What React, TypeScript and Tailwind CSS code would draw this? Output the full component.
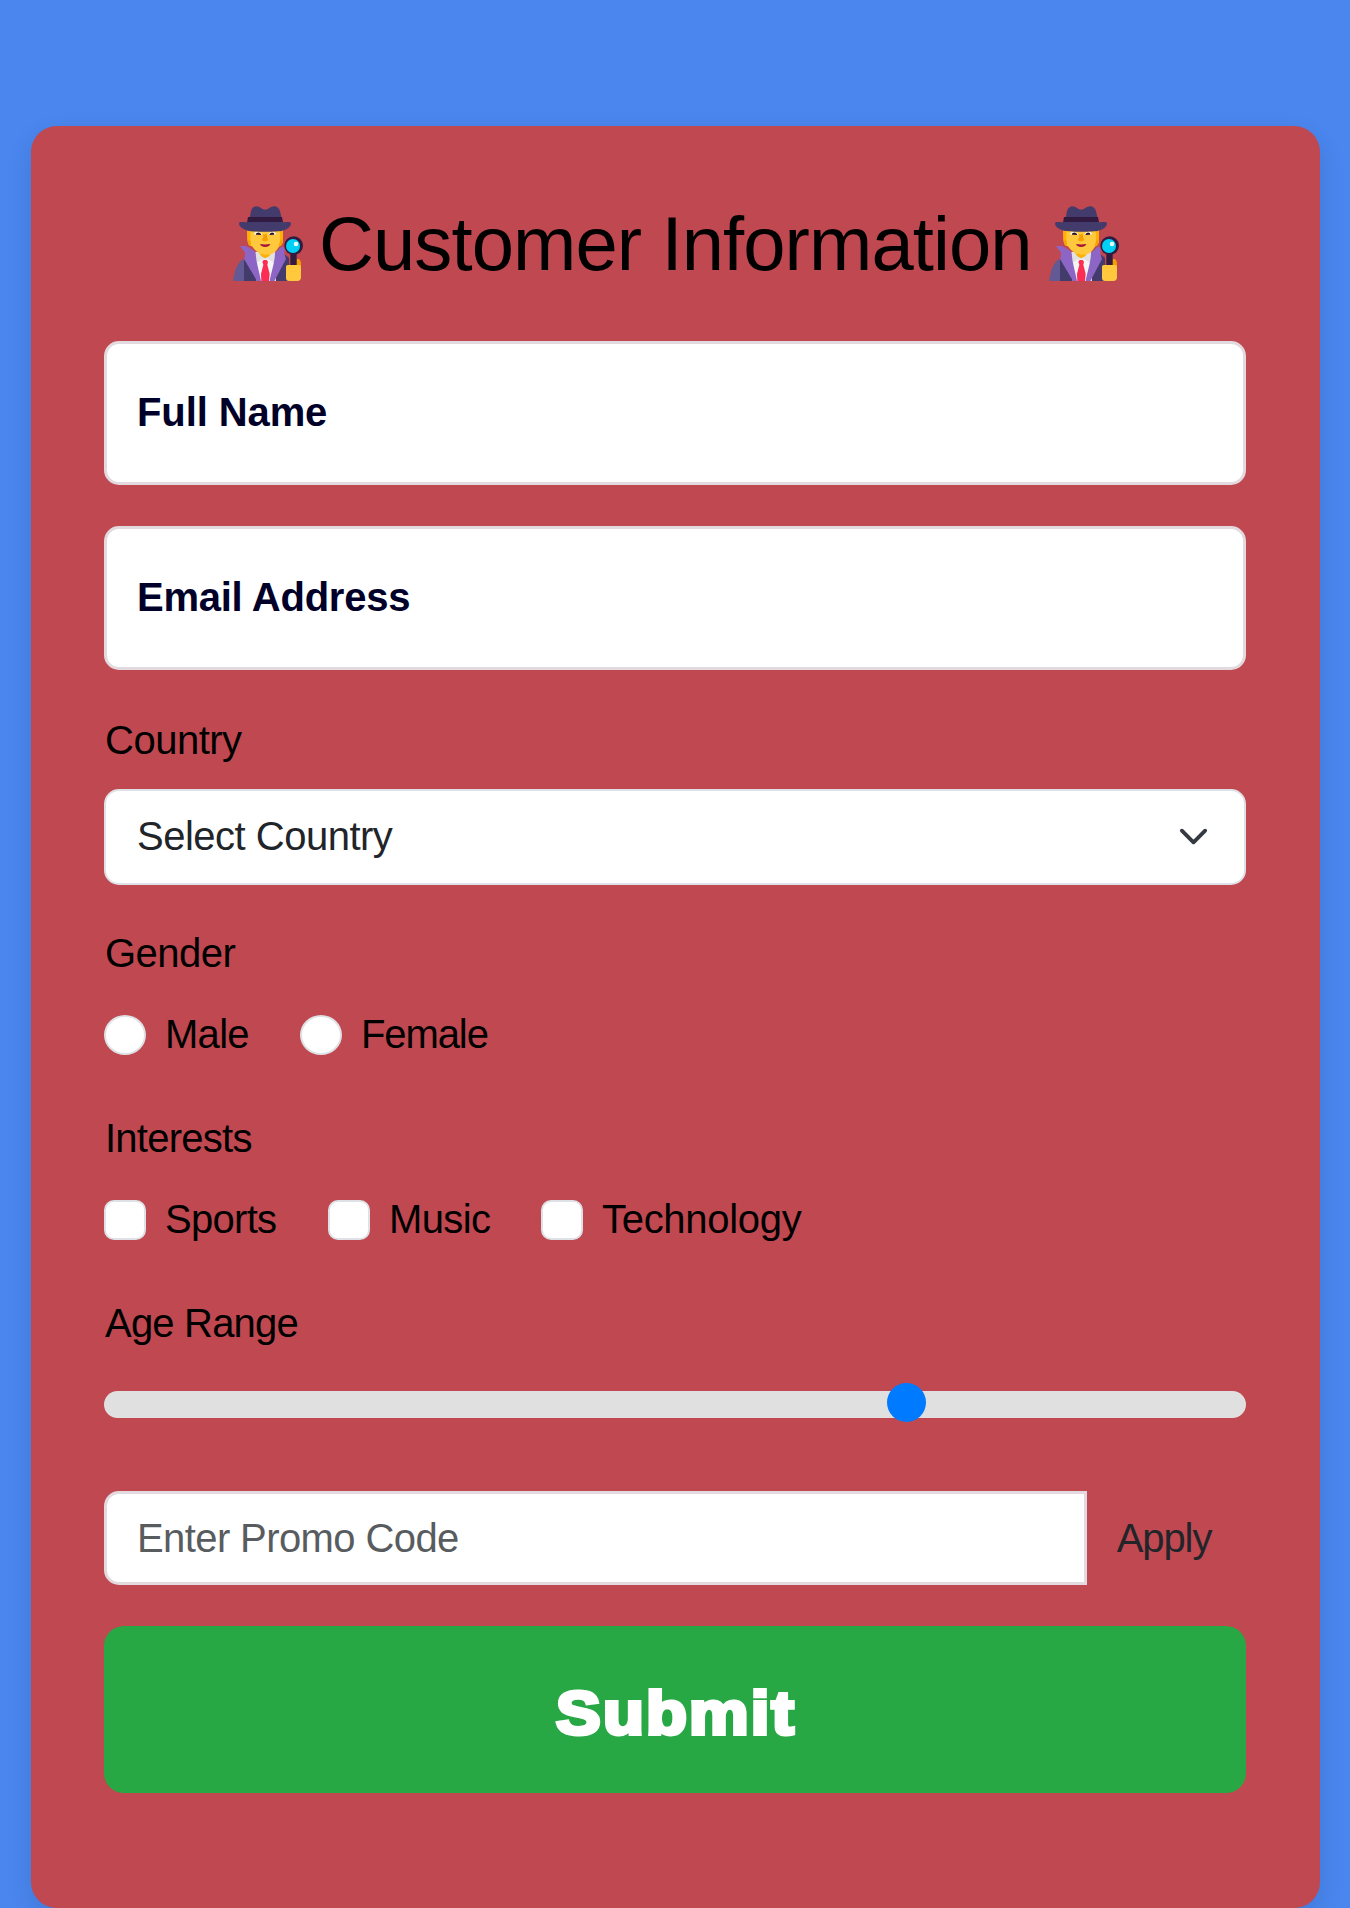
import React from "react";

function Detective() {
  return (
    <svg viewBox="39 48 210 225" className="h-[75px] w-[70px] shrink-0" aria-label="detective">
      <path d="M72 207C54 214 45 236 39 273H90V207Z" fill="#635994" />
      <path d="M72 207L80 190H190L207 204V273H72Z" fill="#433b6b" />
      <path d="M106 186H164L168 273H110Z" fill="#e6e6e6" />
      <path d="M104 192L121 273H151L170 192L150 205L135 210L120 205Z" fill="#f4f4f4" />
      <path d="M106 187L109 218L122 210L135 204L148 210L163 218L166 187Z" fill="#e1e1e3" />
      <path d="M115 185L124 199L135 205L147 199L157 185Z" fill="#ffb002" />
      <path d="M82 120H189V148C189 158 187 167 178 169L168 183C153 197 146 193 135 194C122 193 108 187 96 169L90 167C82 165 82 140 82 120Z" fill="#ffc83d" />
      <path d="M82 122H91V153L93 169C84 165 82 155 82 143Z" fill="#ffb002" />
      <path d="M83 150L91 153L93 168L87 165Z" fill="#f59f00" />
      <path d="M189 122H180V153L177 169C187 165 189 155 189 143Z" fill="#ffb002" />
      <path d="M189 146L180 153L177 169L185 165Z" fill="#f59f00" />
      <path d="M102 132C105 123 123 123 127 134L123 135H106Z" fill="#fff" />
      <path d="M145 134C148 123 165 123 168 132L164 135H148Z" fill="#fff" />
      <path d="M107 134C108 125 123 125 124 135ZM148 135C149 125 164 125 163 134Z" fill="#351513" />
      <path d="M129 133H141V142L144 148C144 153 139 154 135 154C130 154 126 152 126 147L130 142Z" fill="#f59f00" />
      <path d="M120 162C130 164 140 164 151 162C148 174 123 174 120 162Z" fill="#a3133b" />
      <path d="M60 168L78 168C86 171 92 179 100 180L107 189C108 218 118 244 123 273H111L72 207L76 190Z" fill="#8d65c5" />
      <path d="M165 189L187 168L194 177L193 190L198 207L163 273H149C154 245 164 220 165 189Z" fill="#8d65c5" />
      <path d="M131 210H140L144 215L142 224L149 252L147 273H124L123 252L130 224L127 215Z" fill="#fb2d55" />
      <path d="M87 96L93 63C97 49 109 46 118 51L128 57Q135 60 143 57L153 51C164 46 176 49 180 64L188 96Z" fill="#433b6b" />
      <path d="M84 81H186L189 98H81Z" fill="#321b41" />
      <path d="M57 99C60 93 75 98 83 96H188C197 98 212 93 213 101C212 111 199 119 187 122C177 126 95 126 84 122C71 119 57 111 57 99Z" fill="#433b6b" />
      <path d="M229 208C239 205 243 212 243 222V237H229Z" fill="#f59f00" />
      <path d="M211 190H230V232H211Z" fill="#321b41" />
      <circle cx="221" cy="167" r="28" fill="#321b41" />
      <circle cx="219" cy="168" r="21" fill="#00d0f5" />
      <circle cx="228" cy="162" r="7" fill="#e5fbff" />
      <path d="M203 225H236Q243 225 243 232V262Q243 273 232 273H207Q198 273 198 264V231Q198 225 203 225Z" fill="#ffc83d" />
    </svg>
  );
}

const text = "whitespace-nowrap text-[40px] leading-[60px]";

function TextField({ label, className }: { label: string; className: string }) {
  return (
    <div className={`flex h-36 items-center rounded-[15px] border-[3px] border-[#e2dade] bg-white pl-[30px] ${className}`}>
      <span className={`${text} -mt-0.5 font-bold text-[#000028]`}>{label}</span>
    </div>
  );
}

function Option({ label, box, className }: { label: string; box: string; className: string }) {
  return (
    <label className={`flex h-10 items-center ${className}`}>
      <span className={`h-10 w-[42px] shrink-0 border-2 border-[#dee2e6] bg-white ${box}`} />
      <span className={`${text} -mt-0.5 ml-[19px]`}>{label}</span>
    </label>
  );
}

export default function App() {
  return (
    <div className="h-[1908px] w-full overflow-hidden bg-[#4a86ee] px-[30.5px] pt-[126px] font-['Liberation_Sans',Arial,sans-serif] text-black">
      <form className="flex h-[1782px] flex-col rounded-[26px] bg-[#c04850] px-[73.5px] pt-20 shadow-[0_10px_26px_rgba(0,0,0,0.1)]">
        <div className="flex h-[75px] items-center justify-center pl-0.5">
          <Detective />
          <h1 className="ml-4 mr-[13px] w-[717px] whitespace-nowrap text-[76px] leading-[75px] tracking-[-0.9px]">Customer Information</h1>
          <Detective />
        </div>

        <TextField label="Full Name" className="mt-[60px] tracking-[-0.1px]" />
        <TextField label="Email Address" className="mt-[41px] tracking-[-0.25px]" />

        <div className={`${text} mt-10 pl-px tracking-[-0.5px]`}>Country</div>
        <div className="mt-[19px] flex h-24 items-center justify-between rounded-[15px] border-2 border-[#dee2e6] bg-white pl-[31px] pr-[35px]">
          <span className={`${text} -mt-0.5 tracking-[-0.5px] text-[#212529]`}>Select Country</span>
          <svg viewBox="0 0 16 16" className="-mt-0.5 h-[31px] w-[31px]" fill="none" stroke="#343a40" strokeWidth="2" strokeLinecap="round" strokeLinejoin="round">
            <path d="m2 5 6 6 6-6" />
          </svg>
        </div>

        <div className={`${text} mt-[38px] pl-px tracking-[-0.5px]`}>Gender</div>
        <div className="mt-8 flex">
          <Option label="Male" box="rounded-[50%]" className="w-[196px] tracking-[-0.7px]" />
          <Option label="Female" box="rounded-[50%]" className="tracking-[-1.1px]" />
        </div>

        <div className={`${text} mt-[53px] pl-px tracking-[-0.75px]`}>Interests</div>
        <div className="mt-8 flex">
          <Option label="Sports" box="rounded-[10px]" className="w-[224px] tracking-[-0.7px]" />
          <Option label="Music" box="rounded-[10px]" className="w-[213px] tracking-[-0.6px]" />
          <Option label="Technology" box="rounded-[10px]" className="tracking-[-0.3px]" />
        </div>

        <div className={`${text} mt-[53px] pl-px tracking-[-0.8px]`}>Age Range</div>
        <div className="relative mt-[38px] h-[27px] shrink-0 rounded-full bg-[#e0e0e0]">
          <span className="absolute left-[783px] top-[-8.5px] h-[39px] w-[39px] rounded-full bg-[#007bff]" />
        </div>

        <div className="mt-[73px] flex h-[94px]">
          <div className="flex w-[983px] items-center rounded-l-[15px] border-[3px] border-[#e2dade] bg-white pl-[30px]">
            <span className={`${text} tracking-[-0.6px] text-[#595c5f]`}>Enter Promo Code</span>
          </div>
          <button type="button" className={`${text} flex-1 pr-[5px] tracking-[-1.1px] text-[#212529]`}>Apply</button>
        </div>

        <button
          type="button"
          className="mt-[41px] h-[167px] shrink-0 rounded-[20px] bg-[#28a745] pl-[3px] pt-1.5 text-[62px] font-bold leading-none tracking-[2px] text-white [-webkit-text-stroke:4px_white] [paint-order:stroke_fill]"
        >
          <span className="inline-block scale-x-[1.08]">Submit</span>
        </button>
      </form>
    </div>
  );
}
